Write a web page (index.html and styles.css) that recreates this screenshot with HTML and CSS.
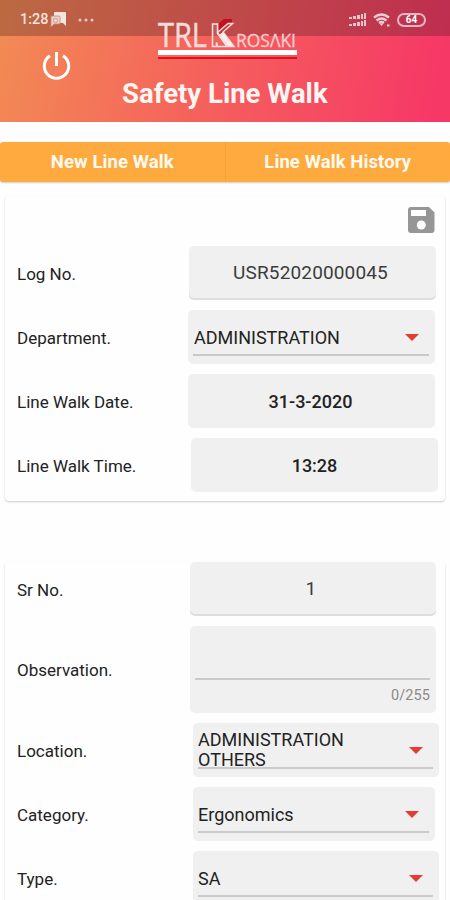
FILE: index.html
```html
<!DOCTYPE html>
<html lang="en">
<head>
  <meta charset="UTF-8">
  <meta name="viewport" content="width=device-width, initial-scale=1.0">
  <title>Safety Line Walk</title>
  <link rel="stylesheet" href="styles.css">
</head>
<body>
  <div class="app">
    <header class="header">
      <div class="status">
        <span class="time">1:28</span>
        <svg class="notify" width="17" height="16" viewBox="0 0 17 16">
          <path d="M5 0h10q1 0 1 1v13l-3-3H5q-1 0-1-1V1q0-1 1-1z" fill="#f6e6e2"/>
          <path d="M2 4h7q1 0 1 1v6q0 1-1 1H4l-3 3V5q0-1 1-1z" fill="#eed3cc" stroke="#c08b79" stroke-width=".8"/>
          <circle cx="5.500" cy="8.500" r="2.200" fill="none" stroke="#d09c8b"/>
        </svg>
        <svg class="dots" width="16" height="4" viewBox="0 0 16 4" fill="#e9cdc6">
          <circle cx="2" cy="2" r="1.500"/><circle cx="8" cy="2" r="1.500"/><circle cx="14" cy="2" r="1.500"/>
        </svg>
        <svg class="signal" width="18" height="14" viewBox="0 0 18 14" fill="#e9c3ca">
          <path d="M0 4h3v2H0zM4 3h3v3H4zM8 2h3v4H8zM12 1h2v5h-2zM15 0h2v6h-2z"/>
          <path d="M0 11h3v2H0zM4 10h3v3H4zM8 9h3v4H8zM12 8h2v5h-2zM15 7h2v6h-2z"/>
        </svg>
        <svg class="wifi" width="18" height="14" viewBox="0 0 18 14" fill="none" stroke="#efcdd4" stroke-width="2.400">
          <path d="M1 4.500q7.500-6 15 0M3.500 7.500q5-4 10 0M6 10q2.500-2 5 0"/>
          <path d="M6.500 10.500l2 2.500 2-2.500z" fill="#efcdd4" stroke="none"/>
          <path d="M14 12.500h2.500" stroke-width="2"/>
        </svg>
        <span class="battery">64</span>
      </div>
      <!-- logo -->
      <svg class="logo" width="142" height="54" viewBox="0 -10 142 54">
        <path d="M1 34h139v5H1z" fill="#fff"/>
        <path d="M1 41h139v2H1z" fill="#e0101c"/>
        <path d="M62 7L67 3h8v4L65 18h-3z" fill="#c4121c"/>
        <path d="M55.500 8h5v9.500L70 30.500H60.500l-1-4v4h-4zM60.500 16.500L71 7.500h4.500L66 16l11 14.500h-6.500z" fill="#d9706b" fill-opacity=".35" stroke="#f6dfdd" stroke-width="1.500"/>
        <path d="M62.500 18.500L66 16l10.500 14.500H71z" fill="#fbeeed"/>
        <text class="logo-trl" x="1" y="31" textLength="49" lengthAdjust="spacingAndGlyphs">TRL</text>
        <text class="logo-rosaki" x="79" y="30.500" textLength="60" lengthAdjust="spacingAndGlyphs">ROSΛKI</text>
      </svg>
      <div class="toolbar">
        <svg class="power" width="30" height="30" viewBox="0 0 30 30" fill="none" stroke="#fff" stroke-width="3">
          <path d="M15.500 1v14M9 4.800a12.200 12.200 0 1 0 13 0"/>
        </svg>
        <h1 class="title">Safety Line Walk</h1>
      </div>
    </header>

    <nav class="tabs">
      <div class="tab">New Line Walk</div>
      <div class="tab">Line Walk History</div>
    </nav>

    <section class="card log">
      <div class="actions">
        <svg class="save" width="27" height="26" viewBox="0 0 27 26">
          <path d="M3 0h18l5.500 5.500V23q0 3-3 3H3q-3 0-3-3V3q0-3 3-3z" fill="#969696"/>
          <path d="M3 3h15v6H3z" fill="#fff"/>
          <circle cx="13.300" cy="18" r="4.500" fill="#fff"/>
        </svg>
      </div>
      <div class="row row-log">
        <span class="label">Log No.</span>
        <div class="field lined"><span class="number">USR52020000045</span></div>
      </div>
      <div class="row row-dept">
        <span class="label">Department.</span>
        <div class="field select"><span class="value">ADMINISTRATION</span></div>
      </div>
      <div class="row row-date">
        <span class="label">Line Walk Date.</span>
        <div class="field"><span class="strong">31-3-2020</span></div>
      </div>
      <div class="row row-time">
        <span class="label">Line Walk Time.</span>
        <div class="field"><span class="strong">13:28</span></div>
      </div>
    </section>

    <section class="card detail">
      <div class="row row-sr">
        <span class="label">Sr No.</span>
        <div class="field lined"><span class="number">1</span></div>
      </div>
      <div class="row row-obs">
        <span class="label">Observation.</span>
        <div class="field area">
          <div class="area-input"></div>
          <span class="counter">0/255</span>
        </div>
      </div>
      <div class="row row-loc">
        <span class="label">Location.</span>
        <div class="field select"><span class="value">ADMINISTRATION<br>OTHERS</span></div>
      </div>
      <div class="row row-cat">
        <span class="label">Category.</span>
        <div class="field select"><span class="value">Ergonomics</span></div>
      </div>
      <div class="row row-type">
        <span class="label">Type.</span>
        <div class="field select"><span class="value">SA</span></div>
      </div>
    </section>
  </div>
</body>
</html>
```
FILE: styles.css
```css
* {
  box-sizing: border-box;
}

body {
  margin: 0;
  background-color: #fefefe;
  font-family: Roboto, "Liberation Sans", sans-serif;
  color: #222;
}

.app {
  width: 450px;
  height: 900px;
  overflow: hidden;
}

/* header */
.header {
  position: relative;
  height: 122px;
  background: linear-gradient(100deg, #f28b54 0%, #f5625c 45%, #f63866 96%);
}

.status {
  display: flex;
  align-items: center;
  height: 36px;
  padding: 3px 24px 0 20px;
  background-color: rgba(50, 20, 20, .28);
}

.time {
  width: 30px;
  font-size: 14.5px;
  font-weight: 500;
  line-height: 16px;
  color: #f6e2dc;
}

.dots {
  margin-left: 11px;
}

.signal {
  margin-left: auto;
}

.wifi {
  margin-left: 6px;
}

.battery {
  width: 29px;
  height: 14px;
  margin-left: 6px;
  border: 2px solid #e5b5c0;
  border-radius: 7px;
  font-size: 10px;
  font-weight: 700;
  line-height: 10px;
  text-align: center;
  color: #fff;
}

/* the logo overlaps the status bar */
.logo {
  position: absolute;
  left: 157px;
  top: 6px;
}

.logo-trl {
  font-family: "Open Sans", sans-serif;
  font-size: 32px;
  fill: #f4dcda;
  stroke: #f4dcda;
  stroke-width: .5px;
}

.logo-rosaki {
  font-family: "Open Sans", sans-serif;
  font-size: 19px;
  fill: #f9ced0;
  stroke: #f9ced0;
  stroke-width: .3px;
}

.toolbar {
  display: grid;
  grid-template-rows: 28px 30px;
  padding: 15px 0 0 41px;
}

.title {
  margin: 0 0 0 81px;
  font-size: 27.5px;
  font-weight: 700;
  line-height: 30px;
  color: #fff5f1;
  white-space: nowrap;
}

/* tabs */
.tabs {
  display: flex;
  height: 40px;
  margin-top: 20px;
  border-radius: 3px;
  background-color: #ffaa3f;
  box-shadow: 0 1px 2px rgba(0, 0, 0, .2);
}

.tab {
  flex: 1;
  font-size: 18.5px;
  font-weight: 700;
  line-height: 40px;
  letter-spacing: .1px;
  text-align: center;
  color: #fffaf0;
}

.tab + .tab {
  border-left: 1px solid #f6a13a;
}

/* cards */
.card {
  margin: 0 5px;
  border-radius: 4px;
  background-color: #fefefe;
  box-shadow: 0 1px 2px rgba(0, 0, 0, .2);
}

.log {
  height: 305px;
  margin-top: 14px;
}

.detail {
  height: 400px;
  margin-top: 61px;
}

.actions {
  display: flex;
  justify-content: flex-end;
  height: 50px;
  padding: 11px 10px 0 0;
}

.row {
  display: flex;
  align-items: center;
  height: 54px;
  margin-bottom: 10px;
  padding-left: 12px;
}

.label {
  width: 172px;
  padding-top: 1px;
  font-size: 17px;
}

.field {
  display: flex;
  align-items: center;
  justify-content: center;
  width: 247px;
  height: 100%;
  border-radius: 5px;
  background-color: #f0f0f0;
}

.row-dept .label,
.row-date .label {
  width: 171px;
}

.row-time .label {
  width: 174px;
}

.row-sr .label,
.row-obs .label {
  width: 173px;
}

.row-loc .label,
.row-cat .label,
.row-type .label {
  width: 176px;
}

.row-sr .field,
.row-obs .field {
  width: 246px;
}

.row-loc .field,
.row-type .field {
  width: 246px;
}

.row-cat .field {
  width: 242px;
}

.lined {
  padding: 0 4px 2px 0;
  box-shadow: inset 0 -2px 0 #dedede;
}

.number {
  font-size: 19px;
  letter-spacing: .15px;
  color: #3c3c3c;
}

.strong {
  padding-top: 1px;
  font-size: 18px;
  font-weight: 500;
}

.row-date .field {
  padding-right: 2px;
}

.select {
  position: relative;
  justify-content: flex-start;
  padding: 1px 0 0 6px;
}

.value {
  font-size: 18px;
  line-height: 20px;
}

.select::before {
  content: "";
  position: absolute;
  left: 5px;
  right: 6px;
  bottom: 8px;
  height: 2px;
  background-color: #c9c9c9;
}

.select::after {
  content: "";
  position: absolute;
  right: 16px;
  top: 24px;
  border-top: 7px solid #e53b35;
  border-left: 7px solid transparent;
  border-right: 7px solid transparent;
}

.row-loc .select,
.row-cat .select,
.row-type .select {
  padding-left: 5px;
}

.row-loc .value {
  padding-bottom: 2px;
}

.row-obs {
  height: 87px;
}

.area {
  flex-direction: column;
  align-items: stretch;
  justify-content: flex-start;
  padding: 0 6px 0 5px;
}

.area-input {
  height: 54px;
  border-bottom: 2px solid #cacaca;
}

.counter {
  margin-top: 7px;
  font-size: 14.5px;
  line-height: 18px;
  letter-spacing: .1px;
  text-align: right;
  color: #8a8a8a;
}
```
